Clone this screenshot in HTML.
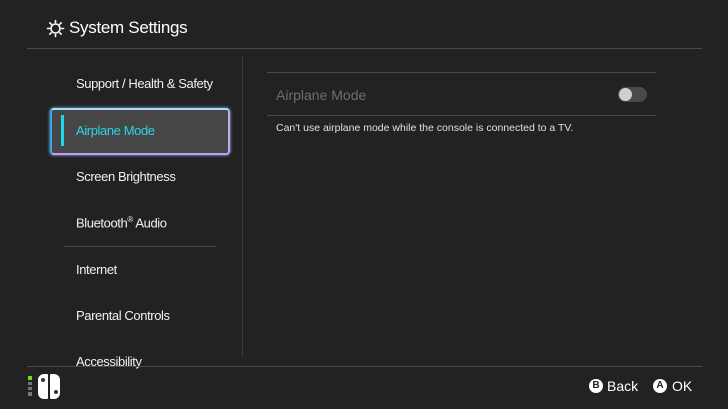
<!DOCTYPE html>
<html><head><style>
body{margin:0;width:728px;height:409px;background:#222222;font-family:"Liberation Sans",sans-serif;color:#fff;position:relative;overflow:hidden}
.a{position:absolute}
.item{position:absolute;left:76px;font-size:13px;color:#f0f0f0;letter-spacing:-0.4px}
.line{position:absolute;height:1px;background:#4a4a4a}
</style></head><body>
<svg class="a" style="left:46px;top:19px" width="19" height="19" viewBox="0 0 19 19">
<circle cx="9.5" cy="9.5" r="4.5" fill="none" stroke="#fff" stroke-width="1.6"/>
<g stroke="#fff" stroke-width="1.6" stroke-linecap="round">
<line x1="9.5" y1="1.5" x2="9.5" y2="3.5"/><line x1="9.5" y1="15.5" x2="9.5" y2="17.5"/>
<line x1="1.5" y1="9.5" x2="3.5" y2="9.5"/><line x1="15.5" y1="9.5" x2="17.5" y2="9.5"/>
<line x1="3.8" y1="3.8" x2="5.2" y2="5.2"/><line x1="13.8" y1="13.8" x2="15.2" y2="15.2"/>
<line x1="3.8" y1="15.2" x2="5.2" y2="13.8"/><line x1="13.8" y1="5.2" x2="15.2" y2="3.8"/></g></svg>
<div class="a" style="left:69px;top:18px;font-size:17px;letter-spacing:-0.3px;color:#fff">System Settings</div>
<div class="line" style="left:27px;top:48px;width:675px"></div>
<div class="a" style="left:242px;top:56px;width:1px;height:302px;background:#3a3a3a"></div>
<div class="item" style="top:76px">Support / Health &amp; Safety</div>
<div class="a" style="left:50px;top:108px;width:176px;height:43px;border-radius:4px;border:2px solid;border-color:#a6e0f0 #c7a6ee #c59cea #3aa4f0;background:#464646;box-shadow:0 0 3px #7ac8ff"></div>
<div class="a" style="left:61px;top:115px;width:3px;height:31px;background:#1ed6e8"></div>
<div class="item" style="top:123px;color:#2fd3e6">Airplane Mode</div>
<div class="item" style="top:169px">Screen Brightness</div>
<div class="item" style="top:215px">Bluetooth<sup style="font-size:8px">®</sup> Audio</div>
<div class="line" style="left:64px;top:246px;width:152px"></div>
<div class="item" style="top:262px">Internet</div>
<div class="item" style="top:308px">Parental Controls</div>
<div class="item" style="top:354px">Accessibility</div>
<div class="line" style="left:267px;top:72px;width:389px"></div>
<div class="a" style="left:276px;top:87px;font-size:14px;color:#6e6e6e">Airplane Mode</div>
<div class="a" style="left:618px;top:87px;width:29px;height:15px;border-radius:8px;background:#4a4a4a"></div>
<div class="a" style="left:619px;top:88px;width:13px;height:13px;border-radius:50%;background:#cfcfcf"></div>
<div class="line" style="left:267px;top:115px;width:389px"></div>
<div class="a" style="left:276px;top:122px;font-size:10.5px;color:#e0e0e0">Can't use airplane mode while the console is connected to a TV.</div>
<div class="line" style="left:27px;top:366px;width:675px"></div>
<div class="a" style="left:28px;top:376px;width:4px;height:4px;background:#6fdc1e"></div>
<div class="a" style="left:28px;top:382px;width:4px;height:3px;background:#777"></div>
<div class="a" style="left:28px;top:387px;width:4px;height:3px;background:#777"></div>
<div class="a" style="left:28px;top:392px;width:4px;height:4px;background:#777"></div>
<div class="a" style="left:38px;top:374px;width:10px;height:25px;background:#fff;border-radius:6px 1px 1px 6px"></div>
<div class="a" style="left:50px;top:374px;width:10px;height:25px;background:#fff;border-radius:1px 6px 6px 1px"></div>
<div class="a" style="left:41px;top:378px;width:4px;height:4px;border-radius:50%;background:#333"></div>
<div class="a" style="left:54px;top:390px;width:4px;height:4px;border-radius:50%;background:#333"></div>
<div class="a" style="left:589px;top:379px;width:14px;height:14px;border-radius:50%;background:#fff;color:#222;font-size:10px;font-weight:bold;text-align:center;line-height:14px">B</div>
<div class="a" style="left:607px;top:378px;font-size:14px;color:#fff">Back</div>
<div class="a" style="left:653px;top:379px;width:14px;height:14px;border-radius:50%;background:#fff;color:#222;font-size:10px;font-weight:bold;text-align:center;line-height:14px">A</div>
<div class="a" style="left:672px;top:378px;font-size:14px;color:#fff">OK</div>
</body></html>
